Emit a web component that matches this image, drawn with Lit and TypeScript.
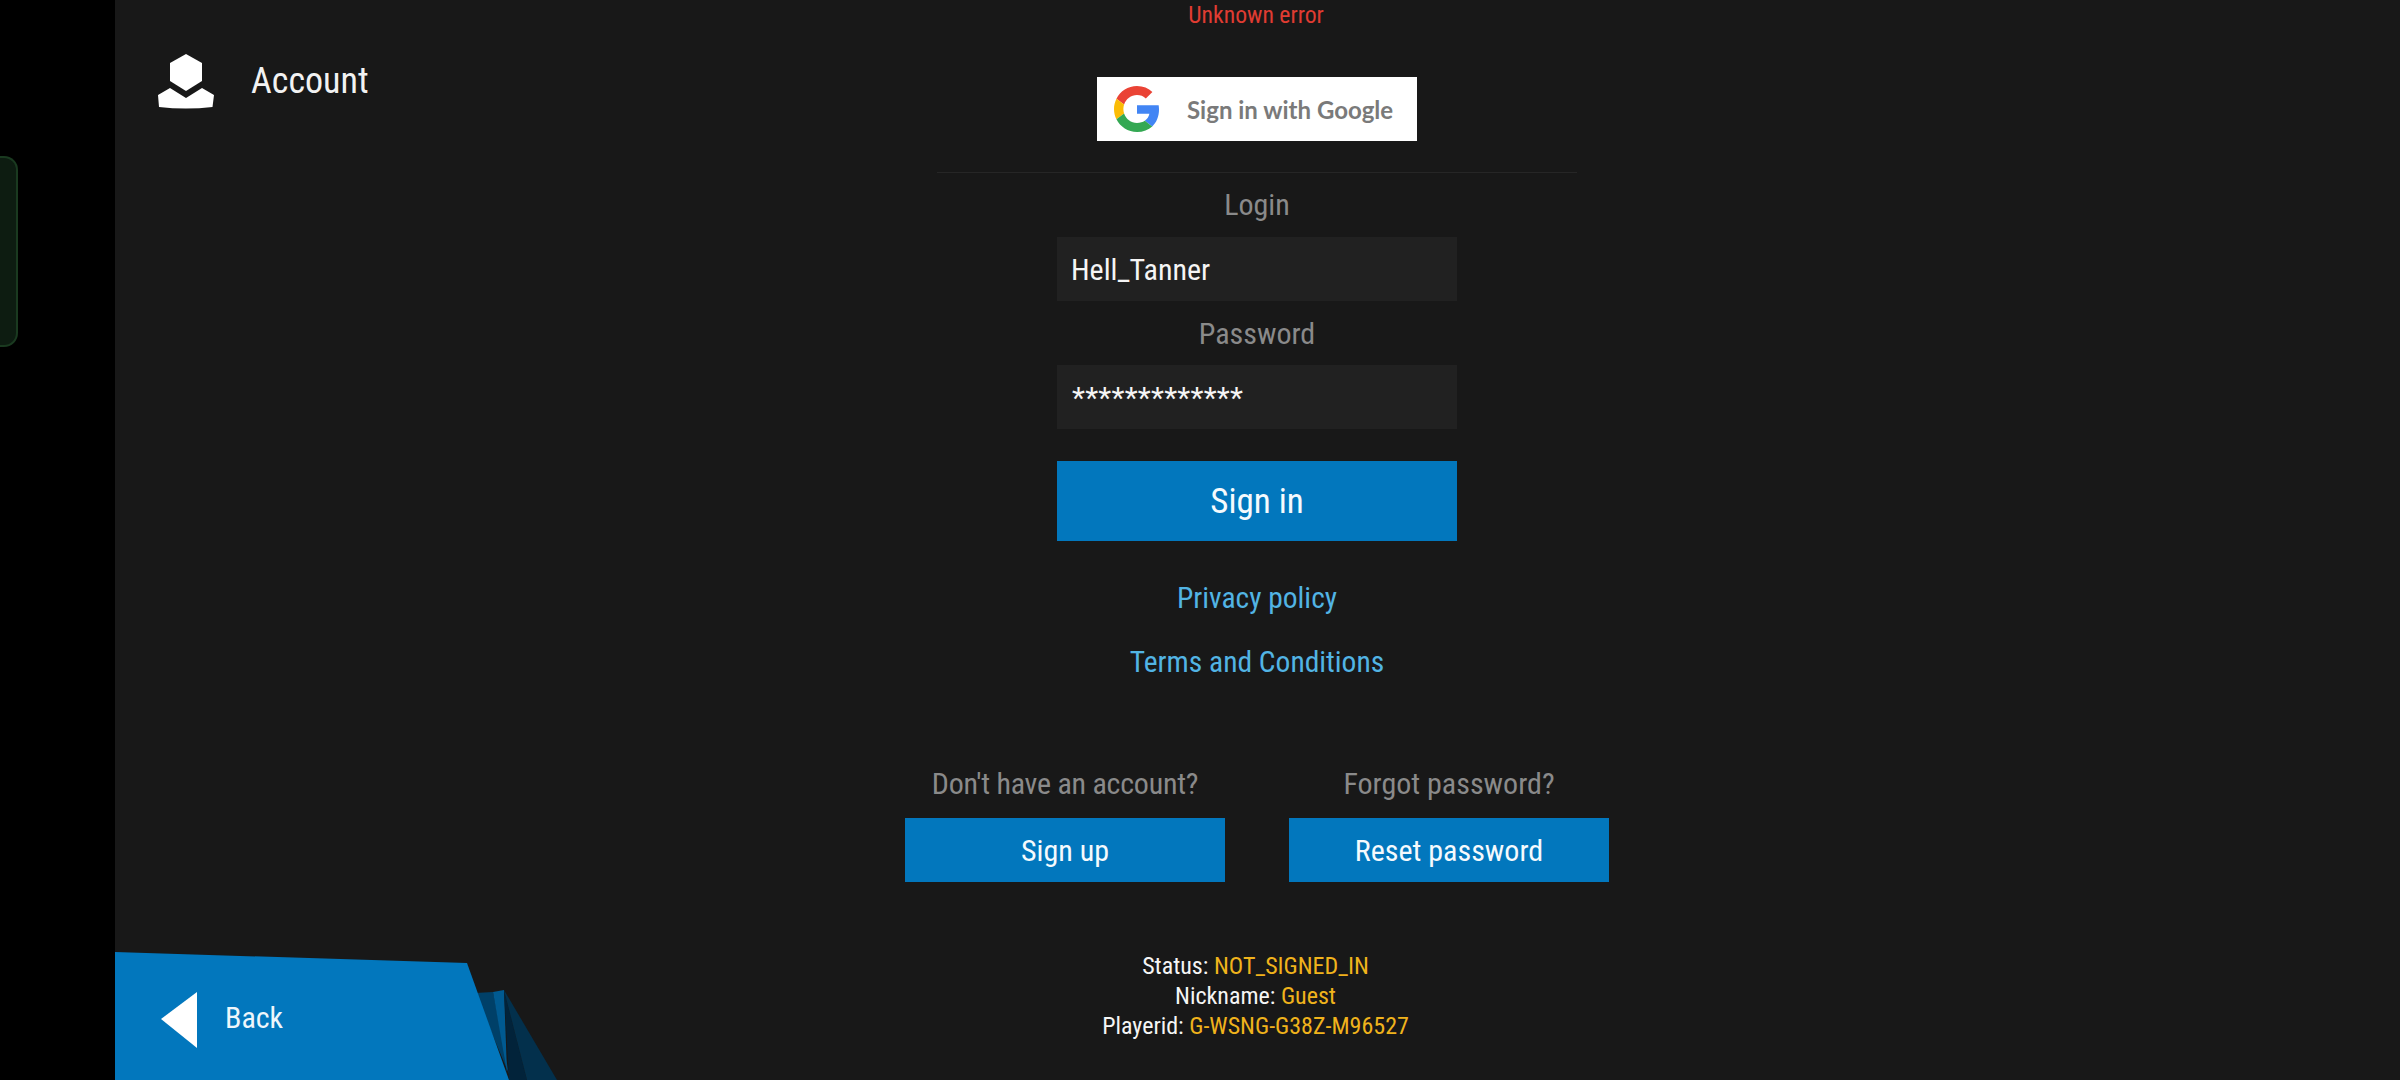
import { LitElement, html, css } from "lit";
import { customElement } from "lit/decorators.js";

@customElement("app-root")
export class AppRoot extends LitElement {
  static override styles = css`
    :host {
      display: grid;
      grid-template-columns: 115px 1fr;
      width: 2400px;
      height: 1080px;
      overflow: hidden;
      background: #000;
      font-family: Roboto, "Liberation Sans", sans-serif;
      font-stretch: 85%;
      color: #fff;
    }

    /* Left rail */
    .rail {
      background: #000;
      padding-top: 156px;
    }

    .edge-tab {
      width: 18px;
      height: 191px;
      box-sizing: border-box;
      border: 2px solid #1a3a20;
      border-left: none;
      border-radius: 0 14px 14px 0;
      background: #0d1c11;
    }

    .panel {
      display: grid;
      grid-template-columns: 782px 720px 1fr;
      background: #181818;
      height: 1080px;
    }

    .side {
      display: flex;
      flex-direction: column;
      justify-content: space-between;
    }

    .title {
      display: flex;
      align-items: center;
      gap: 37px;
      padding: 53px 0 0 43px;
      font-size: 36px;
      line-height: 57px;
      color: #f2f2f2;
    }

    .title svg {
      width: 56px;
      height: 56px;
    }

    .back {
      position: relative;
      width: 445px;
      height: 128px;
    }

    .back svg {
      display: block;
    }

    .back span {
      position: absolute;
      left: 110px;
      top: 46px;
      font-size: 30px;
      line-height: 40px;
      color: #eef6fb;
    }

    /* Centre column */
    .form {
      display: flex;
      flex-direction: column;
      align-items: center;
    }

    .error {
      height: 30px;
      line-height: 30px;
      font-size: 23.7px;
      padding-right: 2px;
      color: #e03c32;
    }

    .google {
      display: flex;
      align-items: center;
      width: 320px;
      height: 64px;
      margin-top: 47px;
      padding-left: 17px;
      box-sizing: border-box;
      background: #fff;
      color: #7a7a7a;
      font-family: Lato, sans-serif;
      font-stretch: normal;
      font-weight: 700;
      font-size: 24px;
    }

    .google svg {
      width: 46px;
      height: 46px;
      margin-right: 27px;
    }

    .divider {
      width: 640px;
      height: 1px;
      margin-top: 31px;
      background: #262626;
    }

    .label {
      font-size: 30px;
      line-height: 40px;
      color: #8a8a8a;
    }

    .login-label {
      margin-top: 12px;
    }

    .signup-label {
      letter-spacing: -0.25px;
    }

    .field {
      display: flex;
      align-items: center;
      width: 400px;
      height: 64px;
      padding-left: 14px;
      box-sizing: border-box;
      background: #212121;
      font-size: 30px;
      color: #f5f5f5;
      margin-top: 12px;
    }

    .password-label {
      margin: 13px 0 -1px;
    }

    .stars {
      align-items: flex-start;
      padding: 7px 0 0 15px;
      line-height: 52px;
      letter-spacing: 0.25px;
    }

    .btn {
      display: flex;
      align-items: center;
      justify-content: center;
      background: #0277bd;
      color: #f5fafd;
    }

    .signin {
      width: 400px;
      height: 80px;
      margin-top: 32px;
      font-size: 35px;
    }

    .link {
      font-size: 29.5px;
      line-height: 40px;
      color: #52b4e4;
    }

    .privacy {
      margin-top: 37px;
    }

    .terms {
      margin-top: 24px;
    }

    .actions {
      display: grid;
      grid-template-columns: 320px 320px;
      column-gap: 64px;
      margin-top: 82px;
      text-align: center;
    }

    .actions .btn {
      height: 64px;
      margin-top: 14px;
      font-size: 30px;
    }

    .status {
      margin-top: 69px;
      padding-right: 3px;
      text-align: center;
      font-size: 24px;
      line-height: 30px;
      color: #f5f5f5;
    }

    .status b {
      font-weight: 400;
      color: #f0b31c;
    }
  `;

  override render() {
    return html`
      <div class="rail"><div class="edge-tab"></div></div>
      <div class="panel">
        <div class="side">
          <div class="title">
            <svg viewBox="0 0 56 56">
              <path fill="#fff" d="M28 0 44 9V27L28 37 12 27V9Z" />
              <path
                fill="#fff"
                d="M12 34 28 44 44 34 56 41 54.500 53Q28 56 1 53L0 41Z"
              />
            </svg>
            Account
          </div>
          <div class="back">
            <svg width="445" height="128" viewBox="0 0 445 128">
              <path fill="#004068" d="M360 41 378 40 394 122Z" />
              <path fill="#005a91" d="M378 40 389 38 392 120Z" />
              <path fill="#02233a" d="M389 38 394 128H412Z" />
              <path fill="#03304c" d="M389 38 412 128H442Z" />
              <path fill="#0277bd" d="M0 0 352 11 394 128H0Z" />
              <path fill="#fff" d="M46 67 82 40V96Z" />
            </svg>
            <span>Back</span>
          </div>
        </div>

        <div class="form">
          <div class="error">Unknown error</div>
          <div class="google">
            <svg viewBox="0 0 48 48">
              <path
                fill="#ea4335"
                d="M24 9.500c3.540 0 6.710 1.220 9.210 3.600l6.850-6.850C35.900 2.380 30.470 0 24 0 14.620 0 6.510 5.380 2.560 13.220l7.980 6.190C12.430 13.720 17.740 9.500 24 9.500z"
              />
              <path
                fill="#4285f4"
                d="M46.980 24.550c0-1.570-.15-3.090-.38-4.550H24v9.020h12.940c-.58 2.960-2.260 5.480-4.780 7.180l7.730 6c4.510-4.180 7.090-10.360 7.090-17.650z"
              />
              <path
                fill="#fbbc05"
                d="M10.530 28.590c-.48-1.450-.76-2.990-.76-4.590s.27-3.140.76-4.590l-7.980-6.190C.92 16.460 0 20.120 0 24c0 3.880.92 7.540 2.560 10.780l7.970-6.190z"
              />
              <path
                fill="#34a853"
                d="M24 48c6.480 0 11.930-2.130 15.890-5.810l-7.730-6c-2.150 1.450-4.920 2.300-8.160 2.300-6.260 0-11.570-4.220-13.470-9.910l-7.980 6.190C6.510 42.620 14.620 48 24 48z"
              />
            </svg>
            Sign in with Google
          </div>
          <div class="divider"></div>
          <div class="label login-label">Login</div>
          <div class="field">Hell_Tanner</div>
          <div class="label password-label">Password</div>
          <div class="field stars">*************</div>
          <div class="btn signin">Sign in</div>
          <div class="link privacy">Privacy policy</div>
          <div class="link terms">Terms and Conditions</div>
          <div class="actions">
            <div class="label signup-label">Don't have an account?</div>
            <div class="label">Forgot password?</div>
            <div class="btn">Sign up</div>
            <div class="btn">Reset password</div>
          </div>
          <div class="status">
            <div>Status: <b>NOT_SIGNED_IN</b></div>
            <div>Nickname: <b>Guest</b></div>
            <div>Playerid: <b>G-WSNG-G38Z-M96527</b></div>
          </div>
        </div>
        <div></div>
      </div>
    `;
  }
}
